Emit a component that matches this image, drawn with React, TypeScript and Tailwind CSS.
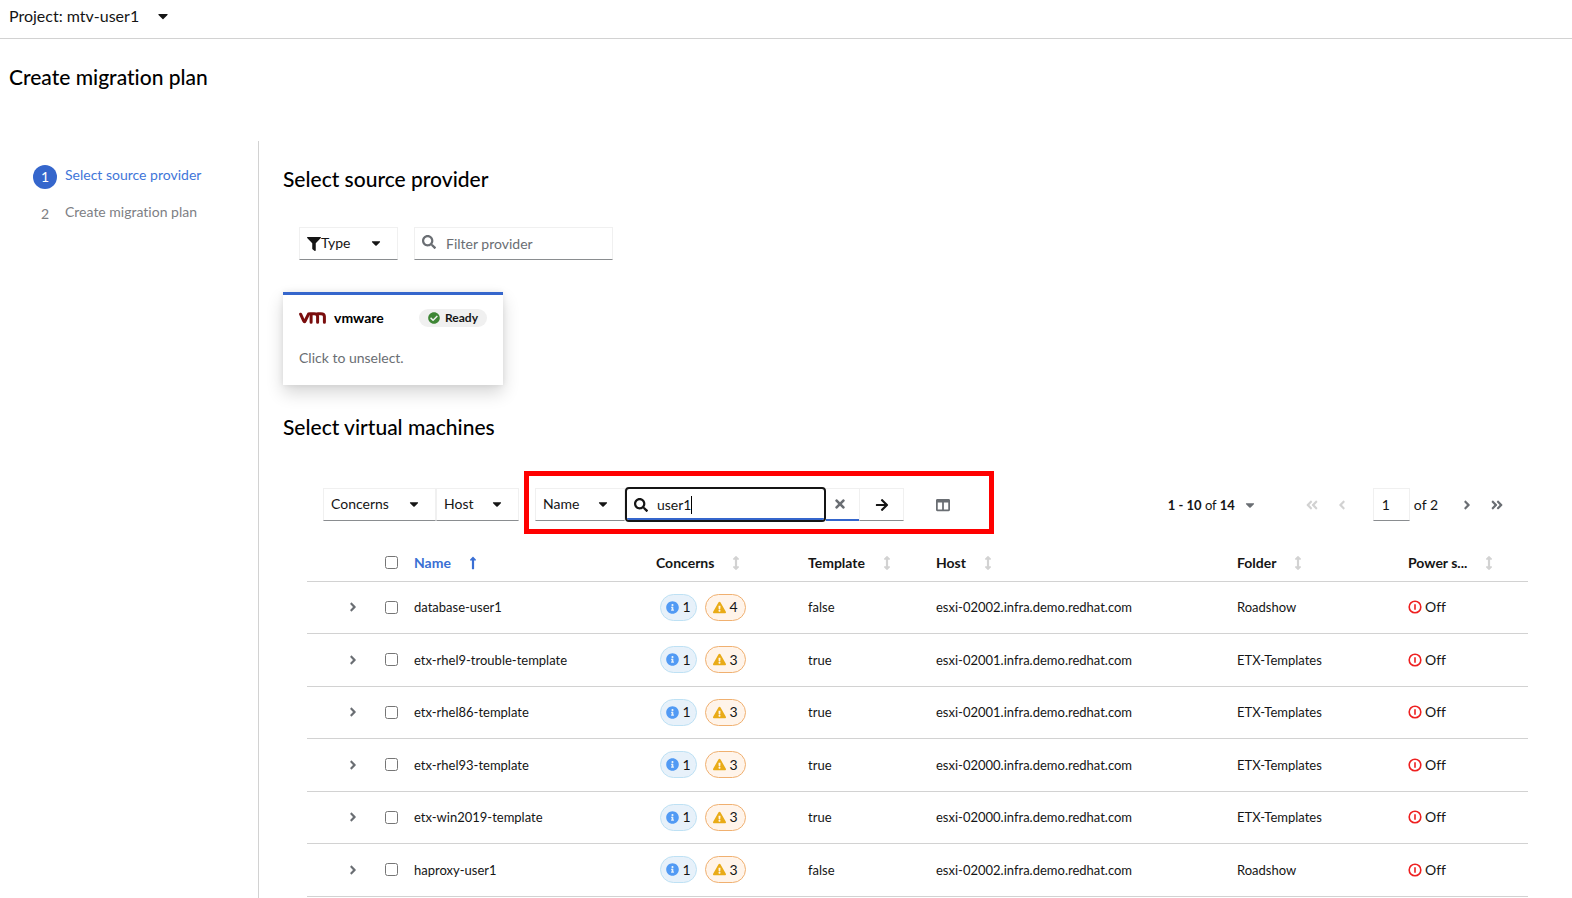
import { useState } from 'react';
import type { ReactNode } from 'react';
import {
  FaAngleDoubleLeft,
  FaAngleDoubleRight,
  FaAngleLeft,
  FaAngleRight,
  FaArrowRight,
  FaArrowsAltV,
  FaCaretDown,
  FaCheckCircle,
  FaColumns,
  FaExclamationTriangle,
  FaFilter,
  FaInfoCircle,
  FaLongArrowAltUp,
  FaSearch,
  FaTimes,
} from 'react-icons/fa';

type Vm = {
  name: string;
  info: number;
  warnings: number;
  template: boolean;
  host: string;
  folder: string;
};

const vms: Vm[] = [
  { name: 'database-user1', info: 1, warnings: 4, template: false, host: 'esxi-02002.infra.demo.redhat.com', folder: 'Roadshow' },
  { name: 'etx-rhel9-trouble-template', info: 1, warnings: 3, template: true, host: 'esxi-02001.infra.demo.redhat.com', folder: 'ETX-Templates' },
  { name: 'etx-rhel86-template', info: 1, warnings: 3, template: true, host: 'esxi-02001.infra.demo.redhat.com', folder: 'ETX-Templates' },
  { name: 'etx-rhel93-template', info: 1, warnings: 3, template: true, host: 'esxi-02000.infra.demo.redhat.com', folder: 'ETX-Templates' },
  { name: 'etx-win2019-template', info: 1, warnings: 3, template: true, host: 'esxi-02000.infra.demo.redhat.com', folder: 'ETX-Templates' },
  { name: 'haproxy-user1', info: 1, warnings: 3, template: false, host: 'esxi-02002.infra.demo.redhat.com', folder: 'Roadshow' },
];

function FilterSelect({ label, width, icon }: { label: string; width: string; icon?: ReactNode }) {
  return (
    <div className={`relative h-[33px] ${width}`}>
      {icon && <span className="pointer-events-none absolute inset-y-0 left-2 flex items-center">{icon}</span>}
      <select
        aria-label={label}
        className={`size-full appearance-none border border-[#f0f0f0] border-b-[#8a8d90] bg-transparent pb-px outline-none ${icon ? 'pl-[21px]' : 'pl-[7px]'}`}
      >
        <option>{label}</option>
      </select>
      <FaCaretDown className="pointer-events-none absolute top-[9px] right-[15px] size-[14px]" />
    </div>
  );
}

function VmwareLogo() {
  return (
    <svg viewBox="0 0 27 12" className="h-3 w-[27px]" fill="none" stroke="#7a0d0d" strokeWidth="3" strokeLinecap="round" strokeLinejoin="round" aria-hidden="true">
      <path d="M1.6 2.2 L4.7 9 Q5.4 10.5 6.1 9 L9.6 1.9 Q10.2 1.7 11 1.7 H15.1 Q18.6 1.7 18.6 4.6 V10.3" />
      <path d="M12.1 10.3 V2.6 M18.6 1.7 H21.8 Q25.4 1.7 25.4 4.6 V10.3" />
    </svg>
  );
}

function OffIcon() {
  return (
    <svg viewBox="0 0 14 14" className="size-[14px]" fill="none" stroke="#ee2020" aria-hidden="true">
      <circle cx="7" cy="7" r="5.8" strokeWidth="1.6" />
      <path d="M7 4.2 V9.8" strokeWidth="1.6" />
    </svg>
  );
}

function SortHeader({ label, title }: { label: string; title?: string }) {
  return (
    <th className="px-2 text-left font-bold" scope="col" title={title}>
      <button className="flex items-center gap-[15px]">
        {label}
        <FaArrowsAltV className="size-[14px] shrink-0 text-[#d2d2d2]" />
      </button>
    </th>
  );
}

function VmRow({ vm }: { vm: Vm }) {
  return (
    <tr className="h-[52px] border-b border-[#d2d2d2] even:h-[53px]">
      <td className="pl-[39px]">
        <button aria-label={`Expand ${vm.name}`} className="flex text-[#6a6e73]">
          <FaAngleRight className="size-[14px]" />
        </button>
      </td>
      <td className="pl-4">
        <input type="checkbox" aria-label={`Select ${vm.name}`} className="block" />
      </td>
      <td className="px-2">{vm.name}</td>
      <td className="pr-2 pl-3">
        <div className="flex gap-2 text-[14px]">
          <span className="flex h-[27px] w-[37px] items-center justify-center gap-[3px] rounded-full border border-[#bee1f4] bg-[#e7f1fa]">
            <FaInfoCircle className="size-[13px] text-[#519af4]" />
            {vm.info}
          </span>
          <span className="flex h-[27px] w-[41px] items-center justify-center gap-[3px] rounded-full border border-[#f0b070] bg-[#fff4ea]">
            <FaExclamationTriangle className="size-[13px] text-[#e9ab17]" />
            {vm.warnings}
          </span>
        </div>
      </td>
      <td className="px-2">{String(vm.template)}</td>
      <td className="px-2">{vm.host}</td>
      <td className="px-2">{vm.folder}</td>
      <td className="px-2">
        <span className="flex items-center gap-[3px] text-[14px]">
          <OffIcon />
          Off
        </span>
      </td>
    </tr>
  );
}

function VmTable() {
  return (
    <table className="mt-6 w-full table-fixed border-collapse">
      <colgroup>
        <col className="w-[62px]" />
        <col className="w-[37px]" />
        <col className="w-[242px]" />
        <col className="w-[152px]" />
        <col className="w-[128px]" />
        <col />
        <col className="w-[171px]" />
        <col className="w-[128px]" />
      </colgroup>
      <thead>
        <tr className="h-9 border-b border-[#d2d2d2]">
          <td />
          <td className="pl-4">
            <input type="checkbox" aria-label="Select all virtual machines" className="block" />
          </td>
          <th className="px-2 text-left font-bold text-[#3a6fd4]" scope="col" aria-sort="ascending">
            <button className="flex items-center gap-[15px]">
              Name
              <FaLongArrowAltUp className="size-[14px]" />
            </button>
          </th>
          <SortHeader label="Concerns" />
          <SortHeader label="Template" />
          <SortHeader label="Host" />
          <SortHeader label="Folder" />
          <SortHeader label="Power s..." title="Power state" />
        </tr>
      </thead>
      <tbody className="text-[13px]">
        {vms.map((vm) => (
          <VmRow key={vm.name} vm={vm} />
        ))}
      </tbody>
    </table>
  );
}

function Pagination() {
  return (
    <nav aria-label="Pagination" className="flex items-center">
      <button className="mr-10 flex items-center gap-2">
        <span className="text-[13px]">
          <b>1 - 10</b> of <b>14</b>
        </span>
        <FaCaretDown className="size-[14px] text-[#6a6e73]" />
      </button>
      <button aria-label="First page" className="flex w-[30px] justify-center text-[#d2d2d2]">
        <FaAngleDoubleLeft className="size-[14px]" />
      </button>
      <button aria-label="Previous page" className="flex w-[30px] justify-center text-[#d2d2d2]">
        <FaAngleLeft className="size-[14px]" />
      </button>
      <input
        aria-label="Current page"
        defaultValue="1"
        className="ml-4 h-[33px] w-[37px] border border-[#f0f0f0] border-b-[#8a8d90] pl-2 outline-none"
      />
      <span className="mr-[14px] ml-1">of 2</span>
      <button aria-label="Next page" className="flex w-[30px] justify-center text-[#6a6e73]">
        <FaAngleRight className="size-[14px]" />
      </button>
      <button aria-label="Last page" className="flex w-[30px] justify-center text-[#6a6e73]">
        <FaAngleDoubleRight className="size-[14px]" />
      </button>
    </nav>
  );
}

function Toolbar() {
  const [query, setQuery] = useState('user1');
  return (
    <div className="mt-[45px] flex items-center justify-between px-4">
      <div className="flex items-center gap-4">
        <div className="flex">
          <FilterSelect label="Concerns" width="w-[113px]" />
          <FilterSelect label="Host" width="w-[83px]" />
        </div>
        <div className="relative flex items-center">
          <FilterSelect label="Name" width="w-[90px]" />
          <div className="relative -my-1 flex h-[35px] w-[201px] items-center gap-2 overflow-hidden rounded-[4px] border-2 border-[#151515] pl-[7px]">
            <FaSearch className="size-[14px] shrink-0" />
            <input
              aria-label="Filter by name"
              value={query}
              onChange={(e) => setQuery(e.target.value)}
              className="field-sizing-content min-w-0 pl-px outline-none"
            />
            <span className="-ml-2 h-[18px] w-px bg-black" />
            <span className="absolute inset-x-0 bottom-0 h-[2px] bg-[#3566cc]" />
          </div>
          <button
            aria-label="Clear"
            onClick={() => setQuery('')}
            className="flex h-[33px] w-[33px] items-center justify-center border-t border-b-2 border-t-[#f0f0f0] border-b-[#3566cc] pr-[6px] text-[#6a6e73]"
          >
            <FaTimes className="size-[14px]" />
          </button>
          <button
            aria-label="Search"
            className="flex h-[33px] w-[45px] items-center justify-center border border-[#f0f0f0] border-b-[#8a8d90]"
          >
            <FaArrowRight className="size-[14px]" />
          </button>
          <button aria-label="Manage columns" className="ml-4 px-4 text-[#6a6e73]">
            <FaColumns className="size-[14px]" />
          </button>
          <div className="pointer-events-none absolute -top-[17px] -right-7 -bottom-[13px] -left-[11px] border-[5px] border-[#ff0000]" />
        </div>
      </div>
      <Pagination />
    </div>
  );
}

export default function App() {
  return (
    <div className="flex min-h-screen flex-col bg-white font-['Lato','Noto_Sans',sans-serif] text-[14px] leading-5 text-[#151515] [font-variant-ligatures:none]">
      <header className="flex h-[39px] items-center border-b border-[#d2d2d2] pb-[6px] pl-[9px] text-[16px]">
        <button className="flex items-center gap-4">
          Project: mtv-user1
          <FaCaretDown className="size-4" />
        </button>
      </header>
      <h1 className="mt-[23px] mb-[49px] pl-[9px] text-[21px] leading-[30px] font-medium text-black">Create migration plan</h1>

      <div className="flex flex-1">
        <nav aria-label="Wizard steps" className="w-[258px] shrink-0 pt-6 pl-[33px]">
          <ol className="flex flex-col gap-[13px]">
            <li>
              <a href="#source" aria-current="step" className="flex gap-2 text-[#3f76d9]">
                <span className="flex size-6 items-center justify-center rounded-full bg-[#3566cc] text-white">1</span>
                Select source provider
              </a>
            </li>
            <li>
              <a href="#plan" className="flex gap-2 text-[#7d8084]">
                <span className="flex size-6 items-center justify-center">2</span>
                Create migration plan
              </a>
            </li>
          </ol>
        </nav>

        <main className="min-w-0 flex-1 border-l border-[#d2d2d2] pt-[23px] pr-11 pl-6">
          <h2 className="text-[21px] leading-[30px] font-medium text-black">Select source provider</h2>
          <div className="mt-[33px] flex gap-4 pl-4">
            <FilterSelect label="Type" width="w-[99px]" icon={<FaFilter className="size-[14px]" />} />
            <div className="relative w-[199px]">
              <FaSearch className="absolute top-2 left-2 size-[14px] text-[#6a6e73]" />
              <input
                aria-label="Filter provider"
                placeholder="Filter provider"
                className="h-[33px] w-full border border-[#f0f0f0] border-b-[#8a8d90] pb-px pl-[31px] outline-none placeholder:text-[#6a6e73]"
              />
            </div>
          </div>

          <article className="mt-8 h-[93px] w-[220px] border-t-[3px] border-[#3566cc] px-4 pt-[13px] shadow-[0_8px_16px_0_rgba(3,3,3,0.16),0_0_6px_0_rgba(3,3,3,0.08)]">
            <div className="flex items-center gap-2">
              <VmwareLogo />
              <h3 className="font-bold text-black">vmware</h3>
              <span className="ml-auto flex h-[18px] w-[68px] items-center justify-center gap-[5px] rounded-full bg-[#f0f0f0] text-[12px] font-bold">
                <FaCheckCircle className="size-3 text-[#3e8635]" />
                Ready
              </span>
            </div>
            <p className="mt-5 text-[#6a6e73]">Click to unselect.</p>
          </article>

          <h2 className="mt-[27px] text-[21px] leading-[30px] font-medium text-black">Select virtual machines</h2>
          <div className="pt-px pl-6">
            <Toolbar />
            <VmTable />
          </div>
        </main>
      </div>
    </div>
  );
}
